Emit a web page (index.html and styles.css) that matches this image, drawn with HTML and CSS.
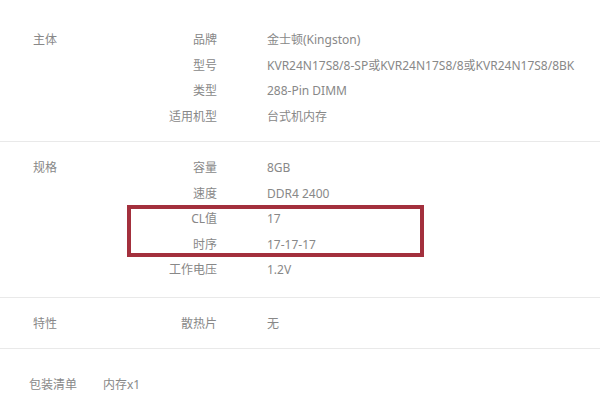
FILE: index.html
```html
<!DOCTYPE html>
<html lang="zh-CN">
<head>
    <meta charset="UTF-8">
    <meta name="viewport" content="width=device-width, initial-scale=1.0">
    <title>规格参数</title>

    <link rel="stylesheet" href="styles.css">
</head>
<body>
    <!-- 主体 -->
    <div class="specGroup firstGroup">
        <div class="groupTitle">主体</div>
        <dl class="specList">
            <dt>品牌</dt><dd>金士顿(Kingston)</dd>
            <dt>型号</dt><dd>KVR24N17S8/8-SP或KVR24N17S8/8或KVR24N17S8/8BK</dd>
            <dt>类型</dt><dd>288-Pin DIMM</dd>
            <dt>适用机型</dt><dd>台式机内存</dd>
        </dl>
    </div>

    <!-- 规格 -->
    <div class="specGroup">
        <div class="groupTitle">规格</div>
        <dl class="specList">
            <dt>容量</dt><dd>8GB</dd>
            <dt>速度</dt><dd>DDR4 2400</dd>
            <dt>CL值</dt><dd>17</dd>
            <dt>时序</dt><dd>17-17-17</dd>
            <dt>工作电压</dt><dd>1.2V</dd>
        </dl>
        <div class="markBox"></div>
    </div>

    <!-- 特性 -->
    <div class="specGroup lastGroup">
        <div class="groupTitle">特性</div>
        <dl class="specList">
            <dt>散热片</dt><dd>无</dd>
        </dl>
    </div>

    <!-- 包装清单 -->
    <div class="packGroup">
        <span class="packTitle">包装清单</span>
        <span>内存x1</span>
    </div>
</body>
</html>
```

FILE: styles.css
```css
body {
    margin: 0;
    background-color: #fff;
    font-family: "Noto Sans", "Noto Sans CJK SC", sans-serif;
    font-size: 12px;
    color: #888;
}

.specGroup {
    position: relative;
    display: flex;
    padding: 13px 0 14px 33px;
    border-bottom: 1px solid #e9e9e9;
}

.firstGroup {
    padding-top: 27px;
    padding-bottom: 12px;
}

.lastGroup {
    padding-bottom: 12px;
}

.groupTitle {
    width: 100px;
    line-height: 25.5px;
}

.specList {
    display: grid;
    grid-template-columns: 84px auto;
    column-gap: 50px;
    margin: 0;
    line-height: 25.5px;
}

.specList dt {
    text-align: right;
    white-space: nowrap;
}

.specList dd {
    margin: 0;
    white-space: nowrap;
}

.markBox {
    position: absolute;
    top: 63px;
    left: 127px;
    width: 297px;
    height: 52px;
    box-sizing: border-box;
    border: 4px solid #a3303d;
}

.packGroup {
    display: flex;
    gap: 26px;
    padding: 23px 0 0 29px;
    line-height: 25.5px;
}
```
